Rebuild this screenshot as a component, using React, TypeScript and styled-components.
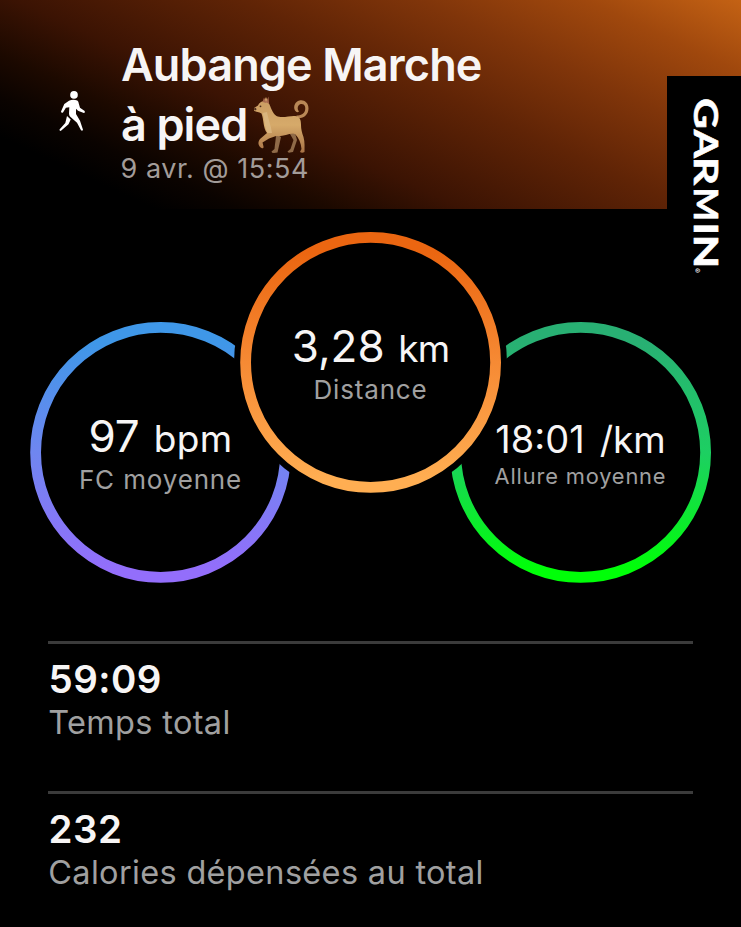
import React from "react";
import styled, { createGlobalStyle } from "styled-components";

const GlobalStyle = createGlobalStyle`
  html, body { margin: 0; background: #000; }
  body { font-family: Inter, "Liberation Sans", sans-serif; overflow: hidden; }
`;

const Screen = styled.main`
  width: 741px;
  height: 927px;
  overflow: hidden;
  background: #000;
  color: #f7f5f5;
`;

const Header = styled.header`
  position: relative;
  display: flex;
  height: 209px;
  box-sizing: border-box;
  padding: 35px 0 0 58px;
  background: linear-gradient(25deg, #000 0%, #000 13%, #0a0300 20%, #1c0900 28%, #3b1303 39%, #602406 58%, #80350a 73%, #a0480d 87%, #c46214 100%);
`;

const WalkIcon = styled.svg`
  width: 28px;
  height: 42px;
  margin: 56px 35px 0 0;
  flex: none;
`;

const Title = styled.h1`
  margin: 0;
  font-size: 45px;
  line-height: 60px;
  font-weight: 600;
  letter-spacing: -0.88px;
  white-space: nowrap;
`;

const TitleLine = styled.div`
  display: flex;
  height: 60px;
`;

const Dog = styled.svg`
  width: 58px;
  height: 58px;
  margin: 1px 0 0 4.5px;
`;

const DateLine = styled.div`
  margin-left: -0.5px;
  font-size: 27px;
  line-height: 28px;
  letter-spacing: 0.55px;
  color: #a39c99;
  white-space: nowrap;
`;

const Brand = styled.div`
  position: absolute;
  top: 76px;
  right: 0;
  width: 74px;
  height: 208px;
  background: #000;
`;

const Rings = styled.section`
  display: flex;
  height: 351px;
  padding: 23px 0 0 30px;
`;

const RingBox = styled.div<{ $front?: boolean }>`
  position: relative;
  z-index: ${(p) => (p.$front ? 1 : 0)};
  flex: none;
  width: 261px;
  height: 261px;
  margin-top: ${(p) => (p.$front ? 0 : 90)}px;
  border-radius: 50%;
  background: ${(p) => (p.$front ? "#000" : "transparent")};
  box-shadow: ${(p) => (p.$front ? "0 0 0 6px #000" : "none")};
  & + & { margin-left: -51px; }
`;

const RingSvg = styled.svg`
  position: absolute;
  inset: 0;
`;

const RingText = styled.div<{ $compact?: boolean }>`
  position: relative;
  display: flex;
  flex-direction: column;
  align-items: center;
  padding-top: ${(p) => (p.$compact ? 92 : 89)}px;
  white-space: nowrap;
`;

const RingValue = styled.div<{ $size: number }>`
  font-size: ${(p) => p.$size}px;
  line-height: 50px;
`;

const Unit = styled.span<{ $gap: number; $spacing: number }>`
  font-size: 37px;
  margin-left: ${(p) => p.$gap}px;
  letter-spacing: ${(p) => p.$spacing}px;
`;

const RingLabel = styled.div<{ $size: number }>`
  margin-top: ${(p) => (p.$size < 24 ? -4 : 1)}px;
  font-size: ${(p) => p.$size}px;
  line-height: 30px;
  letter-spacing: 0.85px;
  color: #a0a0a0;
`;

const Stats = styled.section`
  padding: 58px 48px 0;
`;

const Stat = styled.div`
  box-sizing: border-box;
  height: 150px;
  border-top: 3px solid #3b3b3b;
  padding-top: 13px;
`;

const StatValue = styled.div`
  margin-left: 0.6px;
  font-size: 38.5px;
  line-height: 44px;
  font-weight: 600;
  letter-spacing: 0.4px;
`;

const StatLabel = styled.div`
  margin-left: 0.3px;
  font-size: 32.5px;
  line-height: 44px;
  letter-spacing: 0.32px;
  color: #a0a0a0;
`;

interface RingProps {
  id: string;
  colors: [string, string, string];
  value: string;
  unit: string;
  label: string;
  size?: number;
  unitGap?: number;
  unitSpacing?: number;
  labelSize?: number;
  front?: boolean;
}

function Ring({
  id, colors, value, unit, label, front,
  size = 44, unitGap = 15, unitSpacing = 0, labelSize = 26,
}: RingProps) {
  return (
    <RingBox $front={front}>
      <RingSvg viewBox="0 0 261 261" width="261" height="261">
        <defs>
          <linearGradient id={id} x1="0" y1="0" x2="0" y2="1">
            <stop offset="0.06" stopColor={colors[0]} />
            <stop offset="0.5" stopColor={colors[1]} />
            <stop offset="0.97" stopColor={colors[2]} />
          </linearGradient>
        </defs>
        <circle cx="130.6" cy="130.4" r="125" fill="none" stroke={`url(#${id})`} strokeWidth="10.8" />
      </RingSvg>
      <RingText $compact={size < 40}>
        <RingValue $size={size}>
          {value}
          <Unit $gap={unitGap} $spacing={unitSpacing}>{unit}</Unit>
        </RingValue>
        <RingLabel $size={labelSize}>{label}</RingLabel>
      </RingText>
    </RingBox>
  );
}

function DogDrawing() {
  return (
    <Dog viewBox="0 0 58 58">
      <defs>
        <linearGradient id="fur" x1="0" y1="0" x2="0" y2="1">
          <stop offset="0" stopColor="#c99a62" />
          <stop offset="0.5" stopColor="#d6aa6a" />
          <stop offset="1" stopColor="#a87245" />
        </linearGradient>
      </defs>
      <path d="M24 38C24 43 23 47 22.500 53L19.500 55.500Q19.500 57 22 57L25.500 56.500 29 41ZM38 38L41.500 44 38.500 53 35.500 55.500Q36 57 38 56.500L41 56 45 44 43 37Z" fill="#8f6a48" />
      <path d="M45 22C51 23 56.500 19 56.500 12.500C56.500 6.500 52 3.500 47.500 4.500C43 5.500 41 10.500 43 14.500Q45 17.500 47 15.500C44.500 12.500 46 8.500 49 8C52.500 7.500 54 11 53 14.500C52 18 49 19.500 44.500 19.500Z" fill="#b98856" />
      <path d="M12 5L14 1 16.500 6.500C19 11 20 17 24.500 20C30 22.500 38 19.500 43 20C48 20.500 49 24 49 29C49 33 50 37 51.500 41C53 46 52.500 52 52.500 56Q50 57.500 48 56L49.500 53C49 47 47 42 43 38C37 37 31 41 24 40L17 42.500 10.500 46.500 11.500 50.500Q12 53 9.500 52C6 50 5.500 46 8 43L15 37C11 32 12 24 9.500 17.500C7 15.500 4 16.500 2 14.500L2 12 6 9.500C7 7 9 5.500 12 5Z" fill="url(#fur)" />
      <path d="M10.500 17L15 16C16 23 19 29 20 37L15.500 37C12 30 13 23 10.500 17Z" fill="#dcb985" opacity="0.8" />
      <path d="M10.500 6L12 1.500 14.500 7ZM14 6L16.500 0.500 17 8Z" fill="#a8684f" />
      <path d="M1.500 12.800l2-1 1.200 1.400-1.500 1.200z" fill="#4a2b1c" />
      <circle cx="8.500" cy="10.300" r="0.900" fill="#4a2b1c" />
    </Dog>
  );
}

/* Each wordmark letter is stretched to its own advance along the baseline. */
const wordmark = [
  { letter: "G", x: 0, width: 31 },
  { letter: "A", x: 31.5, width: 28.5 },
  { letter: "R", x: 58.8, width: 28.5 },
  { letter: "M", x: 89.6, width: 33.5 },
  { letter: "I", x: 124.3, width: 13 },
  { letter: "N", x: 136.7, width: 33.5 },
];

function Wordmark() {
  return (
    <svg width="74" height="208" viewBox="0 0 74 208" fill="#fff">
      <g transform="translate(27 22) rotate(90)">
        <text y="0" fontFamily="Lato, sans-serif" fontWeight="700" fontSize="33" stroke="#fff" strokeWidth="0.6">
          {wordmark.map((w) => (
            <tspan key={w.letter} x={w.x} textLength={w.width} lengthAdjust="spacingAndGlyphs">{w.letter}</tspan>
          ))}
        </text>
        <text x="170" y="0" fontFamily="Inter, sans-serif" fontSize="7.500">®</text>
      </g>
    </svg>
  );
}

const stats = [
  { value: "59:09", label: "Temps total" },
  { value: "232", label: "Calories dépensées au total" },
];

export default function App() {
  return (
    <Screen>
      <GlobalStyle />
      <Header>
        <WalkIcon viewBox="0 0 28 42" fill="#fff">
          <circle cx="16" cy="3.900" r="3.800" />
          <path d="M11 9.700Q15 8 19.300 9.500Q20.700 10.500 20.700 12.300L22 16.700 26.700 20Q27.500 21.800 25.800 22L20 19.800 18 17.800 18 23 22 29.700 25 38.700Q24.500 40.200 23 39.300L19 31.700 12 25.500Q11 24.500 11 22.500L11.300 16.300 7.900 16.800 5 21.600Q3.200 22.300 3 20.500L6.300 13Z" />
          <path d="M9 25L12.700 28.600 10.500 33.200 2.700 39.900Q1.200 39.800 1.500 38.500L7.300 32Z" />
        </WalkIcon>
        <div>
          <Title>
            <TitleLine>Aubange Marche</TitleLine>
            <TitleLine>à pied<DogDrawing /></TitleLine>
          </Title>
          <DateLine>9 avr. @ 15:54</DateLine>
        </div>
        <Brand>
          <Wordmark />
        </Brand>
      </Header>
      <Rings>
        <Ring id="heart" colors={["#3f97e8", "#6f86f0", "#936efb"]} value="97" unit="bpm" label="FC moyenne" unitGap={14} unitSpacing={0.4} />
        <Ring id="distance" colors={["#eb6611", "#f68a34", "#ffae52"]} value="3,28" unit="km" label="Distance" unitGap={13.5} unitSpacing={-0.8} front />
        <Ring id="pace" colors={["#28b073", "#1dcf62", "#00ff08"]} value="18:01" unit="/km" label="Allure moyenne" size={38} labelSize={21.8} />
      </Rings>
      <Stats>
        {stats.map((s) => (
          <Stat key={s.label}>
            <StatValue>{s.value}</StatValue>
            <StatLabel>{s.label}</StatLabel>
          </Stat>
        ))}
      </Stats>
    </Screen>
  );
}
